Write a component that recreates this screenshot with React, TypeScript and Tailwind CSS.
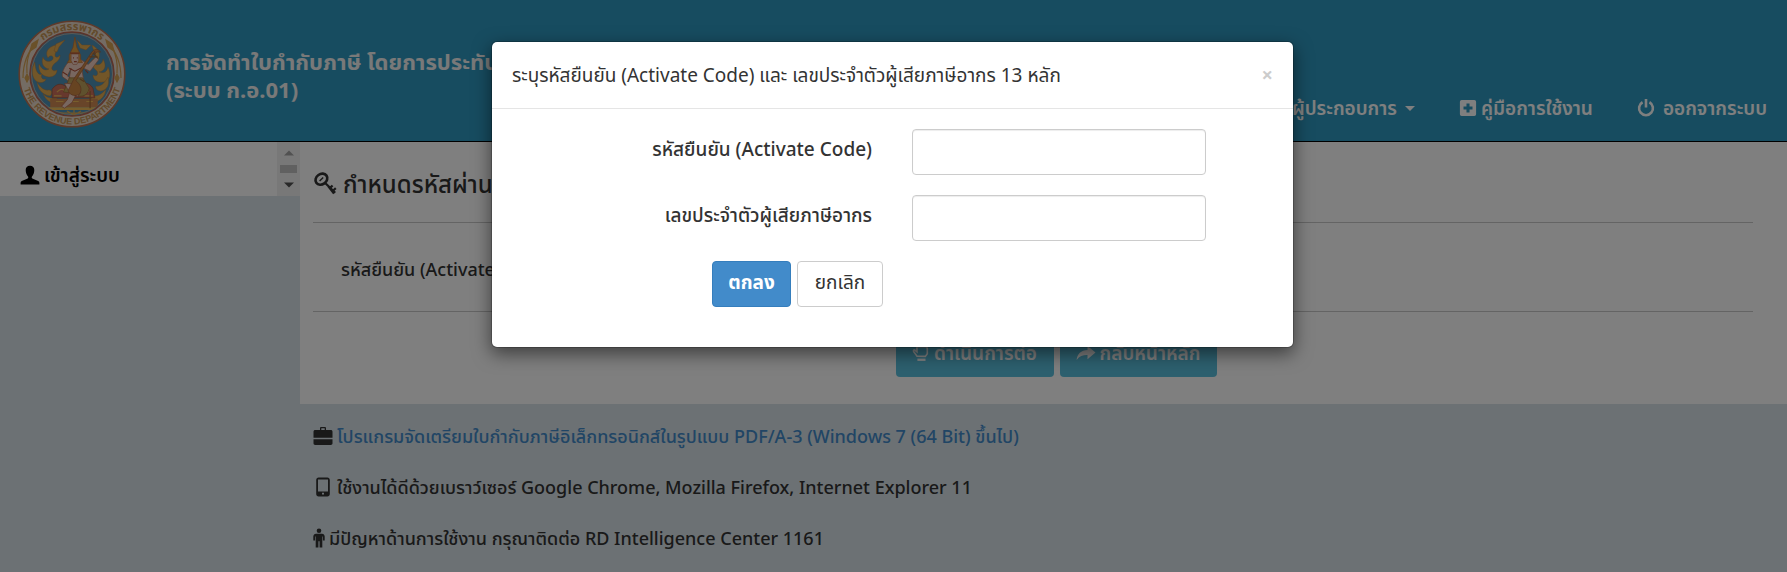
import type { ReactNode, SVGProps } from 'react'

type IconProps = SVGProps<SVGSVGElement>

function Icon({ children, ...props }: IconProps & { children: ReactNode }) {
  return (
    <svg viewBox="0 0 20 20" width="20" height="20" fill="currentColor" aria-hidden="true" {...props}>
      {children}
    </svg>
  )
}

const UserIcon = () => (
  <Icon className="shrink-0">
    <path d="M10 .8c-2.8 0-4.3 1.700-4.300 4.300 0 2.800 1 5 2.300 6.400.4.600.4 1.500-.3 1.900L1.800 16C1 16.400.6 17 .6 17.800v1.600h18.800v-1.600c0-.8-.4-1.400-1.200-1.800l-5.900-2.600c-.7-.4-.7-1.300-.3-1.900 1.300-1.400 2.300-3.600 2.300-6.400C14.300 2.500 12.800.8 10 .8z" />
  </Icon>
)

const KeyIcon = () => (
  <Icon width="24" height="24" className="shrink-0">
    <ellipse cx="7" cy="6" rx="5.200" ry="4.300" transform="rotate(-35 7 6)" fill="none" stroke="currentColor" strokeWidth="2.200" />
    <path d="m5.500 7.500 3-3" stroke="currentColor" strokeWidth="1.200" />
    <path d="m9.500 8.500 9 8.800M14.500 13l1.800-1.800M12.800 12l4.700 6M17.300 15l1.700-1.500" fill="none" stroke="currentColor" strokeWidth="1.900" />
  </Icon>
)

const BriefcaseIcon = () => (
  <Icon className="shrink-0">
    <path d="M7 4V2.200C7 1.500 7.500 1 8.200 1h3.600c.7 0 1.200.5 1.200 1.200V4h4.800c1 0 1.700.7 1.700 1.700v6H.5v-6C.5 4.700 1.200 4 2.200 4zm1.300 0h3.400V2.300H8.300zM.5 13.200h19v4c0 1-.7 1.700-1.700 1.700H2.200c-1 0-1.700-.7-1.700-1.700z" />
  </Icon>
)

const PhoneIcon = () => (
  <Icon className="shrink-0">
    <path
      fillRule="evenodd"
      d="M5.600.5h8.800c1.400 0 2.400 1 2.400 2.400v14.200c0 1.400-1 2.400-2.400 2.400H5.600c-1.400 0-2.400-1-2.400-2.400V2.900C3.200 1.500 4.200.5 5.600.5zM5 2.500v12h10v-12zm4 13.300v1.700h2v-1.700z"
    />
  </Icon>
)

const PersonIcon = () => (
  <Icon viewBox="0 0 12 20" width="12" height="20" className="shrink-0">
    <circle cx="6" cy="2.800" r="2.300" />
    <path d="M3 5.700h6c1.500 0 2.700 1.200 2.700 2.700v4.200H9.900V8.600h-.6v10.900H6.600v-6.200H5.400v6.200H2.700V8.600h-.6v4H.3V8.400C.3 6.900 1.500 5.700 3 5.700z" />
  </Icon>
)

const PlusIcon = () => (
  <Icon width="18" height="18" className="shrink-0">
    <path
      fillRule="evenodd"
      d="M3 1h14a2 2 0 0 1 2 2v14a2 2 0 0 1-2 2H3a2 2 0 0 1-2-2V3a2 2 0 0 1 2-2zm5.300 4v3.300H5v3.400h3.300V15h3.400v-3.300H15V8.300h-3.300V5z"
    />
  </Icon>
)

const PowerIcon = () => (
  <Icon width="18" height="18" className="shrink-0" fill="none" stroke="currentColor" strokeWidth="2.900">
    <path d="M6.200 3.600a7.700 7.700 0 1 0 7.600 0M10 0v9.500" />
  </Icon>
)

const HandDownIcon = () => (
  <Icon width="18" height="20" className="shrink-0" fill="none" stroke="currentColor" strokeWidth="1.800">
    <path d="M5.500 13.500 1.800 8.300C1.200 7.300 2.300 6 3.500 7l2 1.600V3h9.300c1.200 0 2.200 1 2.200 2.200v5.600l-2.200 3z" />
    <path d="M6 17.500h9" strokeWidth="2.600" />
  </Icon>
)

const ShareIcon = () => (
  <Icon className="shrink-0">
    <path d="M11.500 3 19.500 9.500l-8 6.800v-4.200C7 12 3.500 13.200.6 17 1.200 11 5 7 11.500 6.900z" />
  </Icon>
)

function Flames() {
  return (
    <g fill="#e5ad50" stroke="#b97a3a" strokeWidth=".4" transform="translate(2 1)">
      <path d="M46 35c-9 2-11 8-8 13 2-4 6-2 5 1-2 4-9 3-10-2-2 6 0 11 6 12-6 3-8-2-10-5-1 8 3 12 10 13 5 0 8-3 8-7-3 2-6 0-5-3 3-6 8-5 8-12-2 3-5 3-5 0s3-5 1-10z" />
      <path d="M25 52c-3 5-4 13 0 18 4 4 10 3 11-1-3 1-6-1-4-5-4 2-7-4-7-12zM27 72c1 8 6 13 13 14 3-3 2-6-1-6-5 1-9-3-12-8zM33 84c3 6 7 9 12 9l2-5c-5 1-10 0-14-4z" />
      <path d="M82 35c7 4 9 10 6 15-3-3-6 0-4 3 3 4 9 1 9-4 4 7 2 12-4 13 6 2 8-1 9-5 4 9 1 15-5 15-6 1-10-2-10-7 3 2 6 0 4-4-4-3-6-7-4-12 2 3 4 1 3-3-1-4-3-6-4-11z" />
      <path d="M98 67c2 8-1 13-7 14-4 0-6-3-5-5 4 1 8-2 12-9zM96 79c-1 9-8 14-14 12-2-4 0-6 3-5 4 0 8-3 11-7zM67 30l5 5 9 0-5 5-6-2zM46 34l9-4-6 7-2 5-3-1z" />
    </g>
  )
}

function Deity() {
  return (
    <g transform="translate(8 8) scale(.95)">
      <path d="M36 86h50v9H36z" fill="#d08a52" />
      <path d="M34 95h52v3H34z" fill="#f0bd59" />
      <path d="M38 76c5-7 12-7 17 0l9-1c5-7 13-7 17 0l2 10H38z" fill="#cf715b" stroke="#995037" strokeWidth=".7" />
      <path d="M43 79c4-4 7-4 9 0m16 0c4-4 7-4 9 0M42 89h8m8 0h8m8 0h7M40 83h8m24 0h9" fill="none" stroke="#f0bd59" strokeWidth="1.200" />
      <path d="M60 44c-7 3-13 15-11 19l10 7 2-3-7-5 4-8-2 11h15l-2-12 9 4 9-12-3-3-8 8-9-6z" fill="#f0cec0" stroke="#bd7254" strokeWidth=".7" />
      <path d="m62 21-2 11-4 8v5l-2 3h16l-2-3v-5l-4-8z" fill="#e0a043" stroke="#c46e30" strokeWidth=".7" />
      <path d="M58 39h8v7l-2 4h-4l-2-4z" fill="#f0cec0" stroke="#bd7254" strokeWidth=".6" />
      <path d="M57 38h10M60 43h1m3 0h1m-4 4h3M56 54l6 3 8-4M49 58l5 3m19-5 3 3" fill="none" stroke="#af4f38" strokeWidth="1.200" />
      <path d="M56 64h14l7 11c-1 9-11 11-17 5l-10-1 4-9z" fill="#bfa25c" stroke="#986b33" strokeWidth=".7" />
      <path d="m57 78-3 9-6 7 3 2 8-6 6-12M51 70c8-1 12 3 17 9l-3 5-9-5z" fill="#f0cec0" stroke="#af5d42" strokeWidth=".7" />
      <path d="M83 36 63 67c5 4 7 9 4 14-5 4-12 0-12-4l6-12 18-27c3-5 8-5 10-1-3-1-5 0-6 2z" fill="#ce8845" stroke="#9f5638" strokeWidth=".6" />
      <path d="M77 42h9m-5-4 5 5m-19 22 5 3M78 78v18" fill="none" stroke="#a36c37" strokeWidth="1.400" />
    </g>
  )
}

function DepartmentSeal() {
  return (
    <svg viewBox="10 10 108 110" className="h-[110px] w-[108px]" role="img" aria-label="THE REVENUE DEPARTMENT">
      <defs>
        <path id="seal-top" d="M20 65a44 44 0 0 1 88 0" />
        <path id="seal-bottom" d="M13.500 65a50.500 50.500 0 0 0 101 0" />
        <clipPath id="seal-inner">
          <circle cx="64" cy="65" r="41" />
        </clipPath>
      </defs>
      <circle cx="64" cy="65" r="52.800" fill="#e9d8c8" stroke="#bd7454" strokeWidth="1.600" />
      <circle cx="64" cy="65" r="42" fill="#4f93b8" stroke="#bc6650" strokeWidth="1.600" />
      <circle cx="64" cy="65" r="40.500" fill="none" stroke="#e7c0a5" strokeWidth=".7" />
      <g clipPath="url(#seal-inner)">
        <Flames />
        <Deity />
        <path d="M52 104h27m-20-2 7 4 7-4m-7-1v6" fill="none" stroke="#e5ad50" strokeWidth="1.200" />
      </g>
      <g fill="none" stroke="#d5a253" strokeWidth="1.200">
        <path d="M29 33c-9 9-14 21-14 36m9-31c-4 8-6 17-5 26M99 33c9 9 14 21 14 36m-9-31c4 8 6 17 5 26" />
        <path d="m30 31-6 4-2 7 6-4zM98 31l6 4 2 7-6-4zM17 69l2 4 2-4-2-4zm90 0 2 4 2-4-2-4z" fill="#d5a253" />
      </g>
      <g fill="#c49555" fontWeight="700">
        <text fontSize="11">
          <textPath href="#seal-top" startOffset="50%" textAnchor="middle">กรมสรรพากร</textPath>
        </text>
        <text fontSize="9" fontFamily="Liberation Sans">
          <textPath href="#seal-bottom" startOffset="50%" textAnchor="middle">THE REVENUE DEPARTMENT</textPath>
        </text>
      </g>
    </svg>
  )
}

function Header() {
  return (
    <header className="flex h-[142px] items-start justify-between border-b border-black bg-[#2e98c0] pr-5 pl-[18px] font-semibold text-white">
      <div className="flex items-start">
        <div className="pt-[19px]">
          <DepartmentSeal />
        </div>
        <h1 className="pt-[47px] pl-10 text-[22px] leading-7 font-bold text-[#f2f2f2]">
          การจัดทำใบกำกับภาษี โดยการประทับรับรองเวลา
          <br />
          (ระบบ ก.อ.01)
        </h1>
      </div>
      <nav className="flex gap-11 pt-24 text-[19px] leading-6">
        <a href="#operator" className="flex items-center gap-2">
          ผู้ประกอบการ
          <svg viewBox="0 0 10 5" width="10" height="5" fill="currentColor" aria-hidden="true">
            <path d="M0 0h10L5 5z" />
          </svg>
        </a>
        <a href="#manual" className="flex items-center gap-1">
          <PlusIcon />
          คู่มือการใช้งาน
        </a>
        <a href="#logout" className="flex items-center gap-2">
          <PowerIcon />
          ออกจากระบบ
        </a>
      </nav>
    </header>
  )
}

function Sidebar() {
  return (
    <aside className="w-[300px] shrink-0">
      <div className="flex h-[54px] bg-white">
        <a href="#login" className="flex grow items-center gap-1 pt-3 pl-5 text-[19px] leading-6 font-semibold text-black">
          <UserIcon />
          เข้าสู่ระบบ
        </a>
        <div className="flex w-[23px] flex-col items-center justify-between bg-[#f1f1f1] py-2" aria-hidden="true">
          <svg viewBox="0 0 10 5" width="10" height="6" fill="#a3a3a3">
            <path d="M0 5h10L5 0z" />
          </svg>
          <div className="h-2 w-[17px] bg-[#c1c1c1]" />
          <svg viewBox="0 0 10 5" width="10" height="6" fill="#505050">
            <path d="M0 0h10L5 5z" />
          </svg>
        </div>
      </div>
    </aside>
  )
}

function Content() {
  return (
    <main className="grow text-[18px] leading-6 text-[#333]">
      <section className="bg-white pr-[34px] pb-[27px] pl-[13px]">
        <h2 className="flex h-20 items-center gap-[6px] pt-1 text-[24px] font-medium">
          <KeyIcon />
          กำหนดรหัสผ่าน
        </h2>
        <div className="flex h-[90px] items-center border-y border-[#c8c8c8] pt-1 pl-7 font-medium">
          รหัสยืนยัน (Activate Code)
        </div>
        <div className="flex justify-center gap-[6px] pt-5 pl-[46px] text-[19px] font-semibold text-white">
          <button type="button" className="flex h-[45px] w-[158px] items-center justify-center gap-1 rounded bg-[#5bc0de] pb-1">
            <HandDownIcon />
            ดำเนินการต่อ
          </button>
          <button type="button" className="flex h-[45px] w-[157px] items-center justify-center gap-1 rounded bg-[#5bc0de] pb-1">
            <ShareIcon />
            กลับหน้าหลัก
          </button>
        </div>
      </section>
      <section className="flex flex-col gap-[27px] px-[13px] pt-5 pb-5 font-medium">
        <p className="flex items-center gap-1">
          <BriefcaseIcon />
          <a href="#program" className="text-[#428bca]">
            โปรแกรมจัดเตรียมใบกำกับภาษีอิเล็กทรอนิกส์ในรูปแบบ PDF/A-3 (Windows 7 (64 Bit) ขึ้นไป)
          </a>
        </p>
        <p className="flex items-center gap-1">
          <PhoneIcon />
          ใช้งานได้ดีด้วยเบราว์เซอร์ Google Chrome, Mozilla Firefox, Internet Explorer 11
        </p>
        <p className="flex items-center gap-1">
          <PersonIcon />
          มีปัญหาด้านการใช้งาน กรุณาติดต่อ RD Intelligence Center 1161
        </p>
      </section>
    </main>
  )
}

interface FieldProps {
  id: string
  label: string
}

function Field({ id, label }: FieldProps) {
  return (
    <div className="flex gap-10">
      <label htmlFor={id} className="w-[380px] pt-2 text-right font-medium">
        {label}
      </label>
      <input
        id={id}
        type="text"
        className="h-[46px] w-[294px] rounded border border-[#ccc] bg-white px-3 shadow-[inset_0_1px_1px_rgba(0,0,0,0.075)]"
      />
    </div>
  )
}

function ActivateDialog() {
  return (
    <div className="absolute inset-0 bg-black/50 pt-[41px] pr-[2px]">
      <div
        role="dialog"
        aria-labelledby="dialog-title"
        className="mx-auto max-w-[803px] rounded-md border border-black/20 bg-white bg-clip-padding text-[19px] leading-6 text-[#333] shadow-[0_6px_18px_rgba(0,0,0,0.5)]"
      >
        <div className="flex h-[67px] items-center justify-between border-b border-[#e5e5e5] px-5">
          <h2 id="dialog-title">ระบุรหัสยืนยัน (Activate Code) และ เลขประจำตัวผู้เสียภาษีอากร 13 หลัก</h2>
          <button type="button" aria-label="Close" className="text-[20px] font-bold text-[#ccc]">
            ×
          </button>
        </div>
        <form className="flex flex-col gap-5 pt-5 pb-10">
          <Field id="activate-code" label="รหัสยืนยัน (Activate Code)" />
          <Field id="tax-id" label="เลขประจำตัวผู้เสียภาษีอากร" />
          <div className="flex gap-[6px] pl-[220px]">
            <button type="button" className="h-[46px] w-[79px] rounded border border-[#357ebd] bg-[#428bca] pb-1 font-bold text-white">
              ตกลง
            </button>
            <button type="button" className="h-[46px] w-[86px] rounded border border-[#ccc] bg-white pb-1">
              ยกเลิก
            </button>
          </div>
        </form>
      </div>
    </div>
  )
}

export default function App() {
  return (
    <div className="relative min-h-screen bg-[#d8e2e8] font-['Noto_Sans','Noto_Sans_Thai',sans-serif]">
      <Header />
      <div className="flex">
        <Sidebar />
        <Content />
      </div>
      <ActivateDialog />
    </div>
  )
}
